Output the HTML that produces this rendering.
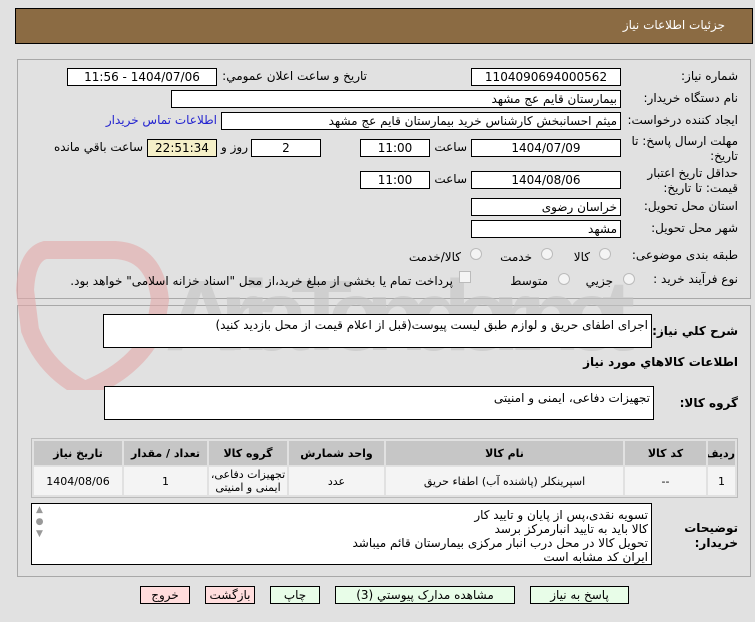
<!DOCTYPE html>
<html><head><meta charset="utf-8"><style>
*{box-sizing:border-box;margin:0;padding:0}
body{width:755px;height:622px;background:#e1e1e1;font-family:Tahoma,"DejaVu Sans","Liberation Sans",sans-serif;font-size:12px;color:#000;position:relative;overflow:hidden}
.a{position:absolute}
.box{position:absolute;background:#fff;border:1px solid #000;height:18px;direction:rtl;padding:0 3px;line-height:16px;font-size:12px;white-space:nowrap}
.c{text-align:center}
.l{position:absolute;direction:rtl;text-align:right;white-space:nowrap;font-size:12px;letter-spacing:-0.3px}
.b{font-weight:bold}
.panel{position:absolute;left:17px;width:734px;border:1px solid #a8a8a8;background:#e1e1e1}
.rad{position:absolute;width:12px;height:12px;border-radius:50%;border:1px solid #bbb;background:#f4f4f4}
table{border-collapse:separate;border-spacing:2px;position:absolute;left:31px;top:438px;width:707px;background:#e1e1e1;border:1px solid #bbb;direction:rtl;table-layout:fixed}
td,th{font-size:11px;text-align:center;overflow:hidden;padding:0}
th{background:#c6c6c6;height:24px}
td{background:#f4f4f4;height:28px;line-height:13px}
.btn{position:absolute;top:586px;height:18px;border:1px solid #000;text-align:center;line-height:16px;font-size:12px}
</style></head><body>
<div class="a" style="left:15px;top:8px;width:738px;height:36px;background:#8b6b43;border:1px solid #000"></div>
<div class="l" style="right:30px;top:18px;color:#fff">جزئیات اطلاعات نیاز</div>

<div class="panel" style="top:59px;height:240px"></div>
<div class="panel" style="top:305px;height:272px"></div>

<svg class="a" style="left:15px;top:240px" width="640" height="150">
<path d="M30 10 L100 10 Q140 12 145 60 L140 90 Q120 130 70 150 Q30 130 15 90 L10 50 Q12 15 30 10Z" fill="none" stroke="#e2a8a8" stroke-width="18" opacity=".6"/>
<text x="150" y="110" font-family="Liberation Sans" font-weight="bold" font-size="100" fill="#c4c4c4" opacity=".6" textLength="470">AriaTender.net</text>
</svg>

<div class="l" style="right:17px;top:69px">شماره نياز:</div>
<div class="box c" style="left:471px;top:68px;width:150px">1104090694000562</div>
<div class="l" style="right:388px;top:69px">تاريخ و ساعت اعلان عمومي:</div>
<div class="box c" style="left:67px;top:68px;width:150px">1404/07/06 - 11:56</div>

<div class="l" style="right:17px;top:91px">نام دستگاه خريدار:</div>
<div class="box" style="left:171px;top:90px;width:450px">بیمارستان قایم  عج  مشهد</div>

<div class="l" style="right:17px;top:113px">ايجاد كننده درخواست:</div>
<div class="box" style="left:221px;top:112px;width:400px">میثم احسانبخش کارشناس خرید بیمارستان قایم  عج  مشهد</div>
<div class="l" style="right:538px;top:113px;color:#2424d0">اطلاعات تماس خريدار</div>

<div class="l" style="right:17px;top:134px;line-height:15px">مهلت ارسال پاسخ: تا<br>تاريخ:</div>
<div class="box c" style="left:471px;top:139px;width:150px">1404/07/09</div>
<div class="l" style="right:288px;top:140px">ساعت</div>
<div class="box c" style="left:360px;top:139px;width:70px">11:00</div>
<div class="box c" style="left:251px;top:139px;width:70px">2</div>
<div class="l" style="right:507px;top:140px">روز و</div>
<div class="box c" style="left:147px;top:139px;width:70px;background:#f5f0c8">22:51:34</div>
<div class="l" style="right:612px;top:140px">ساعت باقي مانده</div>

<div class="l" style="right:17px;top:166px;line-height:15px">حداقل تاريخ اعتبار<br>قيمت: تا تاريخ:</div>
<div class="box c" style="left:471px;top:171px;width:150px">1404/08/06</div>
<div class="l" style="right:288px;top:172px">ساعت</div>
<div class="box c" style="left:360px;top:171px;width:70px">11:00</div>

<div class="l" style="right:17px;top:199px">استان محل تحويل:</div>
<div class="box" style="left:471px;top:198px;width:150px">خراسان رضوی</div>
<div class="l" style="right:17px;top:221px">شهر محل تحويل:</div>
<div class="box" style="left:471px;top:220px;width:150px">مشهد</div>

<div class="l" style="right:17px;top:248px">طبقه بندی موضوعی:</div>
<div class="rad" style="left:599px;top:248px"></div><div class="l" style="right:165px;top:250px">كالا</div>
<div class="rad" style="left:541px;top:248px"></div><div class="l" style="right:223px;top:250px">خدمت</div>
<div class="rad" style="left:470px;top:248px"></div><div class="l" style="right:294px;top:250px">كالا/خدمت</div>

<div class="l" style="right:17px;top:272px">نوع فرآيند خريد :</div>
<div class="rad" style="left:623px;top:273px"></div><div class="l" style="right:142px;top:274px">جزيي</div>
<div class="rad" style="left:558px;top:273px"></div><div class="l" style="right:207px;top:274px">متوسط</div>
<div class="a" style="left:459px;top:271px;width:12px;height:12px;border:1px solid #bbb;background:#f4f4f4"></div>
<div class="l" style="right:302px;top:274px">پرداخت تمام يا بخشی از مبلغ خريد،از محل "اسناد خزانه اسلامی" خواهد بود.</div>

<div class="l b" style="right:17px;top:324px">شرح كلي نياز:</div>
<div class="box" style="left:103px;top:314px;width:549px;height:34px;white-space:normal;padding-top:2px">اجرای اطفای حریق و لوازم طبق لیست پیوست(قبل از اعلام قیمت از محل بازدید کنید)</div>
<div class="l b" style="right:17px;top:355px">اطلاعات كالاهاي مورد نياز</div>
<div class="l b" style="right:17px;top:396px">گروه كالا:</div>
<div class="box" style="left:104px;top:386px;width:550px;height:34px;padding-top:3px">تجهیزات دفاعی، ایمنی و امنیتی</div>

<table>
<colgroup><col style="width:27px"><col style="width:81px"><col style="width:237px"><col style="width:95px"><col style="width:78px"><col style="width:83px"><col></colgroup>
<tr><th>رديف</th><th>کد کالا</th><th>نام کالا</th><th>واحد شمارش</th><th>گروه کالا</th><th>تعداد / مقدار</th><th>تاريخ نياز</th></tr>
<tr><td>1</td><td>--</td><td>اسپرینکلر (پاشنده آب) اطفاء حریق</td><td>عدد</td><td>تجهیزات دفاعی،<br>ایمنی و امنیتی</td><td>1</td><td>1404/08/06</td></tr>
</table>

<div class="l b" style="right:17px;top:521px;line-height:15px">توضيحات<br>خريدار:</div>
<div class="box" style="left:31px;top:503px;width:621px;height:62px;white-space:normal;line-height:14px;font-size:12px;padding-top:4px;overflow:hidden">تسویه نقدی،پس از پایان و تایید کار<br>کالا باید به تایید انبارمرکز برسد<br>تحویل کالا در محل درب انبار مرکزی بیمارستان قائم میباشد<br>ایران کد مشابه است</div>
<div class="a" style="left:32px;top:504px;width:15px;height:60px;background:#fff;color:#999;font-size:9px;text-align:center;line-height:12px">▲<br>●<br>▼</div>

<div class="btn" style="left:140px;width:50px;background:#fdd">خروج</div>
<div class="btn" style="left:205px;width:50px;background:#fdd">بازگشت</div>
<div class="btn" style="left:270px;width:50px;background:#e8fde8">چاپ</div>
<div class="btn" style="left:335px;width:180px;background:#e8fde8">مشاهده مدارک پیوستي (3)</div>
<div class="btn" style="left:530px;width:99px;background:#e8fde8">پاسخ به نیاز</div>
</body></html>
